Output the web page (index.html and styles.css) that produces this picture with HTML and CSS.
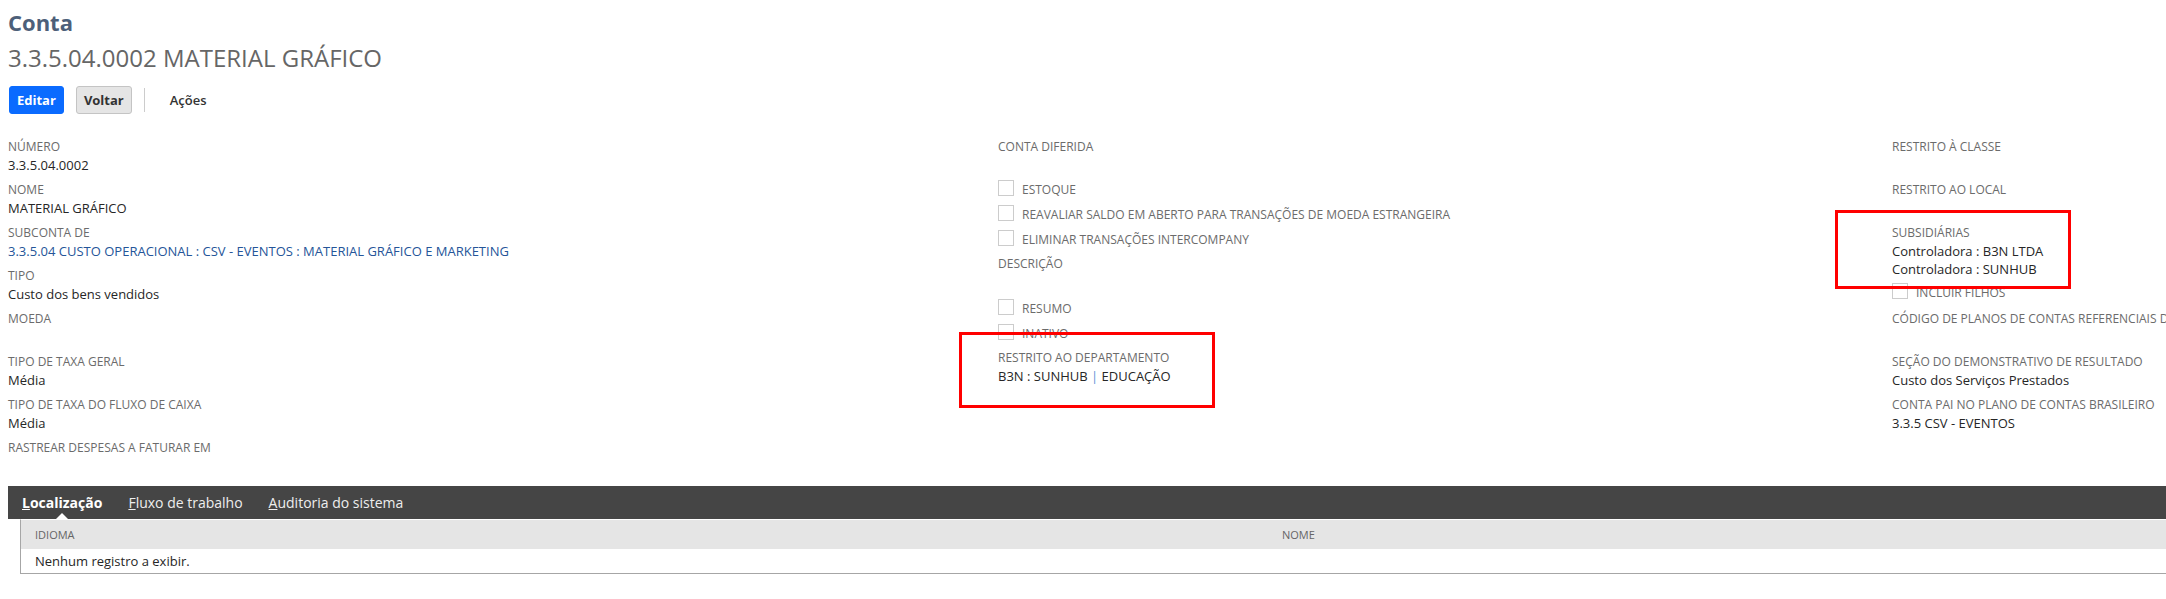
FILE: index.html
```html
<!DOCTYPE html>
<html lang="pt-BR">
<head>
<meta charset="utf-8">
<title>Conta - 3.3.5.04.0002 MATERIAL GRÁFICO</title>
<link rel="stylesheet" href="styles.css">
</head>
<body>
<div class="page">
  <header class="head">
    <h1 class="rectype">Conta</h1>
    <div class="recname">3.3.5.04.0002 MATERIAL GRÁFICO</div>
    <div class="toolbar">
      <button class="btn btn-primary">Editar</button>
      <button class="btn btn-secondary">Voltar</button>
      <span class="tb-sep"></span>
      <span class="tb-menu">Ações</span>
    </div>
  </header>

  <main class="fields">
    <div class="col col1">
      <div class="field"><div class="lbl">Número</div><div class="val">3.3.5.04.0002</div></div>
      <div class="field"><div class="lbl">Nome</div><div class="val">MATERIAL GRÁFICO</div></div>
      <div class="field"><div class="lbl">Subconta de</div><div class="val"><a class="link" href="#">3.3.5.04 CUSTO OPERACIONAL : CSV - EVENTOS : MATERIAL GRÁFICO E MARKETING</a></div></div>
      <div class="field"><div class="lbl">Tipo</div><div class="val">Custo dos bens vendidos</div></div>
      <div class="field"><div class="lbl">Moeda</div><div class="val"></div></div>
      <div class="field"><div class="lbl">Tipo de taxa geral</div><div class="val">Média</div></div>
      <div class="field"><div class="lbl">Tipo de taxa do fluxo de caixa</div><div class="val">Média</div></div>
      <div class="field"><div class="lbl">Rastrear despesas a faturar em</div><div class="val"></div></div>
    </div>

    <div class="col col2">
      <div class="field"><div class="lbl">Conta diferida</div><div class="val"></div></div>
      <div class="cb-group">
        <div class="cb"><span class="box"></span><span class="cb-text">Estoque</span></div>
        <div class="cb"><span class="box"></span><span class="cb-text">Reavaliar saldo em aberto para transações de moeda estrangeira</span></div>
        <div class="cb"><span class="box"></span><span class="cb-text">Eliminar transações intercompany</span></div>
      </div>
      <div class="field"><div class="lbl">Descrição</div><div class="val"></div></div>
      <div class="cb-group cb-group-b">
        <div class="cb"><span class="box"></span><span class="cb-text">Resumo</span></div>
        <div class="cb"><span class="box"></span><span class="cb-text">Inativo</span></div>
      </div>
      <div class="field"><div class="lbl">Restrito ao departamento</div><div class="val">B3N : SUNHUB <span class="pipe">|</span> EDUCAÇÃO</div></div>
    </div>

    <div class="col col3">
      <div class="field"><div class="lbl">Restrito à classe</div><div class="val"></div></div>
      <div class="field"><div class="lbl">Restrito ao local</div><div class="val"></div></div>
      <div class="field">
        <div class="lbl">Subsidiárias</div>
        <div class="val">Controladora : B3N LTDA<br>Controladora : SUNHUB</div>
        <div class="cb cb-inner"><span class="box"></span><span class="cb-text">Incluir filhos</span></div>
      </div>
      <div class="field"><div class="lbl">Código de planos de contas referenciais do SPED</div><div class="val"></div></div>
      <div class="field"><div class="lbl">Seção do demonstrativo de resultado</div><div class="val">Custo dos Serviços Prestados</div></div>
      <div class="field"><div class="lbl">Conta pai no plano de contas brasileiro</div><div class="val">3.3.5 CSV - EVENTOS</div></div>
    </div>
  </main>

  <section class="subtabs">
    <nav class="tabbar">
      <span class="tab active"><u>L</u>ocalização</span>
      <span class="tab"><u>F</u>luxo de trabalho</span>
      <span class="tab"><u>A</u>uditoria do sistema</span>
    </nav>
    <div class="sublist">
      <div class="sl-head">
        <div class="sl-c1">Idioma</div>
        <div class="sl-c2">Nome</div>
      </div>
      <div class="sl-row">Nenhum registro a exibir.</div>
    </div>
  </section>

  <div class="mark mark-dept"></div>
  <div class="mark mark-subs"></div>
</div>
</body>
</html>
```
FILE: styles.css
```css
html, body {
  margin: 0;
  padding: 0;
  background: #ffffff;
  overflow: hidden;
}
body {
  font-family: "Open Sans", "Noto Sans", "Liberation Sans", sans-serif;
  color: #262626;
}
.page {
  position: relative;
  width: 2260px;
  padding: 0 0 0 8px;
}

/* header */
.head {
  padding-top: 8px;
}
.rectype {
  margin: 0;
  font-size: 22px;
  line-height: 28px;
  font-weight: 700;
  color: #4d5f79;
}
.recname {
  margin-top: 7px;
  font-size: 24px;
  line-height: 30px;
  color: #666666;
}
.toolbar {
  margin-top: 13px;
  display: flex;
  align-items: center;
  height: 28px;
}
.btn {
  font-family: inherit;
  font-size: 13px;
  font-weight: 700;
  height: 28px;
  padding: 0 7px;
  border-radius: 3px;
  cursor: pointer;
}
.btn-primary {
  background: #0a6bff;
  color: #ffffff;
  border: 1px solid #0a6bff;
  margin-left: 1px;
}
.btn-secondary {
  background: #e5e5e5;
  color: #333333;
  border: 1px solid #c4c4c4;
  margin-left: 12px;
}
.tb-sep {
  width: 1px;
  height: 24px;
  background: #cccccc;
  margin-left: 12px;
}
.tb-menu {
  margin-left: 25px;
  font-size: 13px;
  font-weight: 600;
  color: #333333;
}

/* fields */
.fields {
  margin-top: 24px;
  display: grid;
  grid-template-columns: 990px 894px 1fr;
}
.col {
  white-space: nowrap;
}
.field {
  padding-bottom: 7px;
}
.lbl {
  font-size: 12px;
  line-height: 18px;
  text-transform: uppercase;
  color: #6b6b6b;
}
.val {
  font-size: 13px;
  line-height: 18px;
  min-height: 18px;
  color: #262626;
}
.link {
  color: #255599;
  text-decoration: none;
}
.pipe {
  color: #5b8fd6;
}
.cb-group {
  margin: -4px 0 3px;
}
.cb-group-b {
  margin-top: -2px;
}
.cb {
  display: flex;
  align-items: center;
  height: 25px;
}
.cb-inner {
  margin: 2px 0 -2px;
}
.box {
  width: 16px;
  height: 16px;
  box-sizing: border-box;
  border: 1px solid #cccccc;
  background: #ffffff;
  margin-top: -3px;
}
.cb-text {
  margin-left: 8px;
  font-size: 12px;
  line-height: 18px;
  text-transform: uppercase;
  color: #6b6b6b;
}

/* subtabs */
.subtabs {
  margin-top: 4px;
}
.tabbar {
  display: flex;
  height: 33px;
  background: #454545;
  padding-left: 14px;
  gap: 26px;
}
.tab {
  position: relative;
  font-size: 14px;
  line-height: 34px;
  color: #eeeeee;
}
.tab.active {
  font-weight: 700;
  color: #ffffff;
}
.tab.active::after {
  content: "";
  position: absolute;
  left: 50%;
  bottom: 0;
  margin-left: -6px;
  border-left: 6px solid transparent;
  border-right: 6px solid transparent;
  border-bottom: 6px solid #ffffff;
}
.sublist {
  margin-left: 12px;
  border-top: 1px solid #ffffff;
  border-left: 1px solid #a6a6a6;
  border-bottom: 1px solid #a6a6a6;
}
.sl-head {
  display: flex;
  height: 29px;
  align-items: center;
  background: #e5e5e5;
  font-size: 11px;
  text-transform: uppercase;
  color: #666666;
}
.sl-c1 {
  width: 1247px;
  padding-left: 14px;
}
.sl-c2 {
  flex: 1;
}
.sl-row {
  height: 24px;
  line-height: 24px;
  padding-left: 14px;
  font-size: 13px;
  color: #262626;
}

/* red annotation frames */
.mark {
  position: absolute;
  border: 3px solid #ff0000;
  box-sizing: border-box;
}
.mark-dept {
  left: 959px;
  top: 332px;
  width: 256px;
  height: 76px;
}
.mark-subs {
  left: 1835px;
  top: 210px;
  width: 236px;
  height: 79px;
}
```
